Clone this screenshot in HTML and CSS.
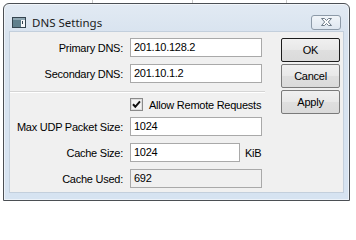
FILE: index.html
```html
<!DOCTYPE html>
<html>
<head>
<meta charset="utf-8">
<title>DNS Settings</title>
<link rel="stylesheet" href="styles.css">
</head>
<body>
<div class="desk"></div>
<div class="window">
  <div class="titlebar">
    <svg class="appicon" width="14" height="11" viewBox="0 0 14 11">
      <rect x="0.5" y="0.5" width="13" height="10" fill="#5f7f8c" stroke="#34444f"/>
      <rect x="1" y="1" width="12" height="2" fill="#8fa7b3"/>
      <rect x="9" y="3" width="4" height="7" fill="#f4f6f8"/>
      <rect x="10" y="4" width="1" height="3" fill="#34444f"/>
    </svg>
    <span class="title">DNS Settings</span>
    <span class="close">
      <svg width="13" height="10" viewBox="0 0 13 10">
        <path d="M1.5 1.5h3l2 2l2-2h3l-3.2 3.5l3.2 3.5h-3l-2-2l-2 2h-3l3.2-3.5z" fill="#fdfdfd" stroke="#6f7c89" stroke-width="1"/>
      </svg>
    </span>
  </div>
  <div class="client">
    <div class="form">
      <div class="row">
        <span class="lbl">Primary DNS:</span>
        <span class="field">201.10.128.2</span>
      </div>
      <div class="row">
        <span class="lbl">Secondary DNS:</span>
        <span class="field">201.10.1.2</span>
      </div>
      <div class="sep"></div>
      <div class="row check-row">
        <span class="lbl"></span>
        <svg class="checkbox" width="13" height="13" viewBox="0 0 13 13">
          <rect x="0.5" y="0.5" width="12" height="12" fill="#fff" stroke="#8a8a8a"/>
          <rect x="1.5" y="1.5" width="10" height="10" fill="#f4f4f4" stroke="#dedede"/>
          <path d="M3 6.3L5.3 8.8L10 3.4" fill="none" stroke="#111" stroke-width="2"/>
        </svg>
        <span class="check-text">Allow Remote Requests</span>
      </div>
      <div class="row after-check">
        <span class="lbl">Max UDP Packet Size:</span>
        <span class="field">1024</span>
      </div>
      <div class="row">
        <span class="lbl">Cache Size:</span>
        <span class="field short">1024</span>
        <span class="unit">KiB</span>
      </div>
      <div class="row">
        <span class="lbl">Cache Used:</span>
        <span class="field readonly">692</span>
      </div>
    </div>
    <div class="buttons">
      <span class="btn default">OK</span>
      <span class="btn">Cancel</span>
      <span class="btn">Apply</span>
    </div>
  </div>
</div>
</body>
</html>
```
FILE: styles.css
```css
html, body {
  margin: 0;
  padding: 0;
}
body {
  background: #ffffff;
  font-family: "Liberation Sans", Arial, sans-serif;
  font-size: 11px;
  letter-spacing: -0.25px;
  color: #000;
}
.desk {
  height: 3px;
  background:
    linear-gradient(90deg, transparent 92px, #c9c9c9 92px, #c9c9c9 93px, transparent 93px),
    linear-gradient(90deg, transparent 192px, #c9c9c9 192px, #c9c9c9 193px, transparent 193px),
    linear-gradient(90deg, transparent 286px, #c9c9c9 286px, #c9c9c9 287px, transparent 287px),
    #ffffff;
}
.window {
  margin-left: 3px;
  width: 347px;
  height: 198px;
  box-sizing: border-box;
  border: 1px solid #4b4f54;
  border-radius: 6px 6px 0 0;
  padding: 0 5px 7px;
  display: flex;
  flex-direction: column;
  background: linear-gradient(180deg, #e2eaf3 0px, #d8e3ef 30px, #d6e3f1 100%);
  box-shadow: inset 0 0 0 1px rgba(255, 255, 255, 0.55);
}
.titlebar {
  height: 27px;
  box-sizing: border-box;
  padding-top: 9px;
  display: flex;
  align-items: center;
}
.appicon {
  display: block;
  margin-left: 3px;
}
.title {
  margin-left: 6px;
  font-family: "Noto Sans", "Open Sans", sans-serif;
  font-size: 11.5px;
  letter-spacing: 0;
  color: #1a1a1a;
}
.close {
  margin-left: auto;
  margin-right: 3px;
  width: 30px;
  height: 15px;
  box-sizing: border-box;
  border: 1px solid #8d9aa8;
  border-radius: 3px;
  background: linear-gradient(180deg, #f1f5f9 0%, #dfe7f0 100%);
  display: flex;
  align-items: center;
  justify-content: center;
}
.close svg {
  display: block;
}
.client {
  flex: 1;
  background: #f0f0f0;
  border: 1px solid #c3cfdc;
  display: flex;
  align-items: flex-start;
  padding: 6px 0 0 3px;
}
.form {
  display: flex;
  flex-direction: column;
}
.row {
  display: flex;
  align-items: center;
  height: 19px;
  margin-top: 7px;
}
.row:first-child {
  margin-top: 0;
}
.lbl {
  width: 110px;
  flex: none;
  text-align: right;
  margin-right: 7px;
  white-space: nowrap;
}
.field {
  width: 132px;
  height: 19px;
  box-sizing: border-box;
  border: 1px solid #a9a9a9;
  background: #ffffff;
  padding-left: 3px;
  line-height: 17px;
  white-space: nowrap;
}
.field.short {
  width: 110px;
}
.field.readonly {
  background: #f0f0f0;
}
.unit {
  margin-left: 5px;
}
.sep {
  margin-top: 8px;
  margin-left: -3px;
  width: 255px;
  height: 1px;
  background: #d5d5d5;
  border-bottom: 1px solid #ffffff;
}
.check-row {
  height: 13px;
  margin-top: 5px;
}
.checkbox {
  display: block;
  flex: none;
}
.check-text {
  margin-left: 6px;
  white-space: nowrap;
}
.after-check {
  margin-top: 6px;
}
.buttons {
  display: flex;
  flex-direction: column;
  gap: 2px;
  margin-left: 16px;
}
.btn {
  width: 59px;
  height: 24px;
  box-sizing: border-box;
  border: 1px solid #7a7a7a;
  border-radius: 2px;
  background: linear-gradient(180deg, #f0f0f0 0%, #e8e8e8 50%, #dfdfdf 51%, #dadada 100%);
  display: flex;
  align-items: center;
  justify-content: center;
}
.btn.default {
  border-color: #1c1c1c;
}
```
